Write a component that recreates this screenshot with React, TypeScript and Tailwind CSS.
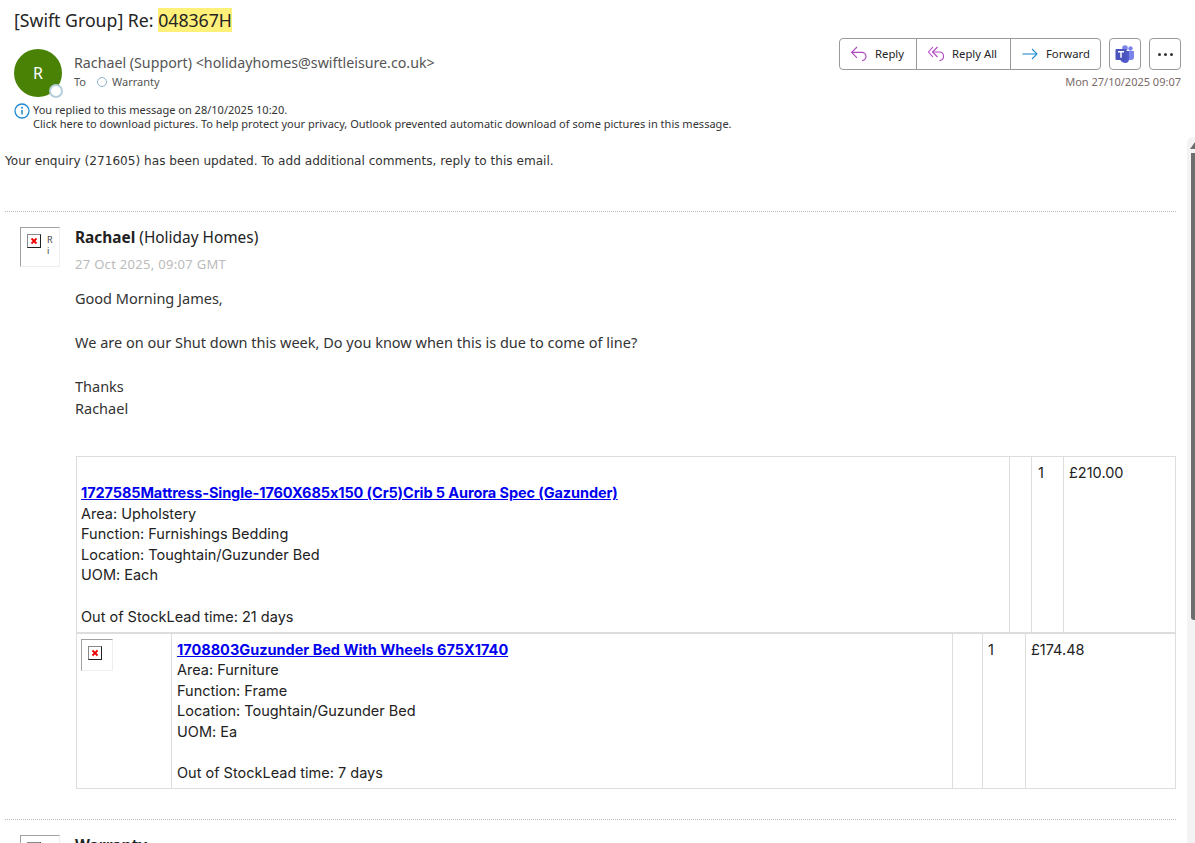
const sans = "font-['Noto_Sans','Open_Sans',sans-serif]";
const cellFont = "font-['Inter','Liberation_Sans',sans-serif] [font-feature-settings:'calt'_0]";

function BrokenImage({ small }: { small?: boolean }) {
  return (
    <div className={"flex border border-t-[#a0a0a0] border-l-[#a0a0a0] border-r-[#eeeeee] border-b-[#eeeeee] " + (small ? "w-8 h-8 pl-1.5 pt-1.5" : "w-10 h-10 pl-1.5 pt-1.5")}>
      <div className="w-3.5 h-3.5 border border-t-[#888] border-l-[#888] border-r-[#222] border-b-[#222] flex items-center justify-center shrink-0">
        <svg width="8" height="8" viewBox="0 0 8 8">
          <path d="M1.5 1.5 L6.5 6.5 M6.5 1.5 L1.5 6.5" stroke="#f00000" strokeWidth="1.8" />
        </svg>
      </div>
      {!small && <div className="ml-1.5 text-[9px] leading-[11px] text-[#444]">R<br />i</div>}
    </div>
  );
}

function ReplyIcon() {
  return (
    <svg width="17" height="16" viewBox="0 0 17 16" fill="none" stroke="#b146c2" strokeWidth="1.1" className="shrink-0">
      <path d="M6 1 L0.7 6.4 L6 11.8" />
      <path d="M0.7 6.4 H10.5 A4 4 0 0 1 15 10.5 A4 4 0 0 1 11 14.6" />
    </svg>
  );
}

function ReplyAllIcon() {
  return (
    <svg width="17" height="16" viewBox="0 0 17 16" fill="none" stroke="#b146c2" strokeWidth="1.1" className="shrink-0">
      <path d="M5 1 L0.5 6 L5 11" />
      <path d="M9.5 1 L4.5 6 L9.5 11" />
      <path d="M4.5 6 H11 A4 4 0 0 1 15.5 10.5 A4 4 0 0 1 11.5 14.6" />
    </svg>
  );
}

function ForwardIcon() {
  return (
    <svg width="16" height="12" viewBox="0 0 16 12" fill="none" stroke="#1f8ad2" strokeWidth="1.1" className="shrink-0">
      <path d="M0.5 6 H15" />
      <path d="M10 1 L15 6 L10 11" />
    </svg>
  );
}

function Toolbar() {
  return (
    <div className="flex items-start gap-2">
      <div className="flex h-8 border border-[#999] rounded text-[11.3px] text-[#242424] bg-white">
        <div className="w-[77px] flex items-center pl-[11px] gap-[7px] border-r border-[#999]">
          <ReplyIcon />
          <span>Reply</span>
        </div>
        <div className="w-[94px] flex items-center pl-[11px] gap-[7px] border-r border-[#999]">
          <ReplyAllIcon />
          <span>Reply All</span>
        </div>
        <div className="w-[89px] flex items-center pl-[11px] gap-[8px]">
          <ForwardIcon />
          <span>Forward</span>
        </div>
      </div>
      <div className="w-8 h-8 border border-[#999] rounded flex items-center justify-center">
        <svg width="20" height="18" viewBox="0 0 20 18">
          <circle cx="15.5" cy="3.5" r="2.2" fill="#7b83eb" />
          <circle cx="10" cy="3" r="2.8" fill="#7b83eb" />
          <path d="M12 6h7v6a3 3 0 0 1-3 3h-4z" fill="#7b83eb" />
          <path d="M5 6h9v8a4 4 0 0 1-4 4 5 5 0 0 1-5-5z" fill="#5059c9" />
          <rect x="0.5" y="4" width="11" height="11" rx="1" fill="#4b53bc" />
          <path d="M3 6.7h6M6 6.7v6" stroke="#fff" strokeWidth="1.5" />
        </svg>
      </div>
      <div className="w-8 h-8 border border-[#999] rounded flex items-center justify-center gap-[3px]">
        <i className="w-[3px] h-[3px] rounded-full bg-[#333]" />
        <i className="w-[3px] h-[3px] rounded-full bg-[#333]" />
        <i className="w-[3px] h-[3px] rounded-full bg-[#333]" />
      </div>
    </div>
  );
}

function Header() {
  return (
    <header className={sans + " h-[135px] px-[14px] pt-[7px] pr-[14px]"}>
      <h1 className="text-[17.7px] leading-[26px] text-[#242424]">
        [Swift Group] Re: <span className="bg-[#fff07a]">048367H</span>
      </h1>
      <div className="flex justify-between mt-px">
        <div className="flex">
          <div className="relative w-12 h-12 mt-[15px] rounded-full bg-[#498205] text-white text-base flex items-center justify-center">
            R
            <span className="absolute -right-px -bottom-px w-[14px] h-[14px] rounded-full bg-white border-2 border-[#b5cfdc]" />
          </div>
          <div className="ml-3 mt-[19px]">
            <div className="text-[14.22px] leading-[20px] text-[#555]">Rachael (Support) &lt;holidayhomes@swiftleisure.co.uk&gt;</div>
            <div className="flex items-center text-[11px] leading-4 mt-[1px] text-[#555]">
              <span>To</span>
              <span className="ml-[11px] mr-[5px] w-[10px] h-[10px] rounded-full border border-[#8fb3cc]" />
              <span>Warranty</span>
            </div>
          </div>
        </div>
        <div className="flex flex-col items-end mt-1">
          <Toolbar />
          <div className="text-[11px] leading-4 mt-[4px] text-[#7a6a6a]">Mon 27/10/2025 09:07</div>
        </div>
      </div>
      <div className="flex text-[11.03px] leading-[14px] text-[#333] mt-[6px]">
        <svg width="16" height="16" viewBox="0 0 16 16" className="mr-[3px] shrink-0">
          <circle cx="8" cy="8" r="7" fill="none" stroke="#1f8ad2" strokeWidth="1.3" />
          <path d="M8 7v4.5" stroke="#1f8ad2" strokeWidth="1.5" />
          <circle cx="8" cy="4.8" r="1" fill="#1f8ad2" />
        </svg>
        <div>
          <div>You replied to this message on 28/10/2025 10:20.</div>
          <div>Click here to download pictures. To help protect your privacy, Outlook prevented automatic download of some pictures in this message.</div>
        </div>
      </div>
    </header>
  );
}

function ItemText({ link, area, fn, uom, lead, linkClass = "" }: { link: string; area: string; fn: string; uom: string; lead: string; linkClass?: string }) {
  return (
    <>
      <a className={"font-bold underline text-[#0000ee] " + linkClass}>{link}</a>
      <div>Area: {area}</div>
      <div>Function: {fn}</div>
      <div>Location: Toughtain/Guzunder Bed</div>
      <div>UOM: {uom}</div>
      <div className="h-[20.6px]" />
      <div>Out of StockLead time: {lead}</div>
    </>
  );
}

function Tables() {
  const border = "border border-[#dddddd]";
  return (
    <div className={cellFont + " ml-[76px] mt-[37px] text-[14.5px] leading-[20.6px] text-[#222]"}>
      <table className="w-[1100px] border-collapse table-fixed">
        <tbody>
          <tr className="h-[176px] align-top">
            <td className={border + " pl-[4px] pt-[26px]"}>
              <ItemText linkClass="tracking-[-0.09px]" link="1727585Mattress-Single-1760X685x150 (Cr5)Crib 5 Aurora Spec (Gazunder)" area="Upholstery" fn="Furnishings Bedding" uom="Each" lead="21 days" />
            </td>
            <td className={border + " w-[22px]"} />
            <td className={border + " w-[32px] pl-[6px] pt-[6px]"}>1</td>
            <td className={border + " w-[112px] pl-[5px] pt-[6px]"}>£210.00</td>
          </tr>
        </tbody>
      </table>
      <table className="w-[1100px] border-collapse table-fixed">
        <tbody>
          <tr className="h-[155px] align-top">
            <td className={border + " w-[95px] pl-[4px] pt-[5px]"}>
              <BrokenImage small />
            </td>
            <td className={border + " pl-[5px] pt-[5.5px]"}>
              <ItemText link="1708803Guzunder Bed With Wheels 675X1740" area="Furniture" fn="Frame" uom="Ea" lead="7 days" />
            </td>
            <td className={border + " w-[30px]"} />
            <td className={border + " w-[43px] pl-[5px] pt-[6px]"}>1</td>
            <td className={border + " w-[150px] pl-[5px] pt-[6px]"}>£174.48</td>
          </tr>
        </tbody>
      </table>
    </div>
  );
}

function Message() {
  return (
    <div className="flex-1 min-w-0 overflow-hidden">
      <p className="font-['DejaVu_Sans',sans-serif] text-[12.12px] leading-4 pl-[5px] pt-[18px] text-[#333]">
        Your enquiry (271605) has been updated. To add additional comments, reply to this email.
      </p>
      <div className="ml-[5px] w-[1171px] mt-[42px] border-t border-dotted border-[#bbbbbb]" />
      <div className={sans + " flex pl-5 pt-[15px]"}>
        <BrokenImage />
        <div className="ml-[15px]">
          <div className="text-[15.4px] leading-[22px] text-[#222]"><b>Rachael</b> (Holiday Homes)</div>
          <div className="text-[13px] leading-[18px] mt-[6px] text-[#bbbbbb] tracking-[0.3px]">27 Oct 2025, 09:07 GMT</div>
          <div className="text-[14.5px] leading-[22px] text-[#333] mt-[14px]">
            <p>Good Morning James,</p>
            <p className="mt-[22px]">We are on our Shut down this week, Do you know when this is due to come of line?</p>
            <p className="mt-[22px]">Thanks</p>
            <p>Rachael</p>
          </div>
        </div>
      </div>
      <Tables />
      <div className="ml-[5px] w-[1171px] mt-[30px] border-t border-dotted border-[#bbbbbb]" />
      <div className={sans + " flex pl-5 pt-[15px]"}>
        <BrokenImage />
        <div className="ml-[15px] text-[15.4px] leading-[22px] font-bold text-[#222]">Warranty</div>
      </div>
    </div>
  );
}

function Scrollbar() {
  return (
    <div className="w-2 mt-[2px] bg-[#f3f3f3] rounded-tl-md shrink-0 flex flex-col items-end">
      <svg width="5" height="7" viewBox="0 0 5 7" className="mt-[5px]">
        <path d="M5 0 V7 H0 Z" fill="#6e6e6e" />
      </svg>
      <div className="w-1 h-[467px] mt-[4px] bg-[#6e6e6e] rounded-bl-[3px]" />
    </div>
  );
}

export default function App() {
  return (
    <div className="w-[1195px] h-[843px] bg-white overflow-hidden flex flex-col">
      <Header />
      <div className="flex flex-1 min-h-0">
        <Message />
        <Scrollbar />
      </div>
    </div>
  );
}
